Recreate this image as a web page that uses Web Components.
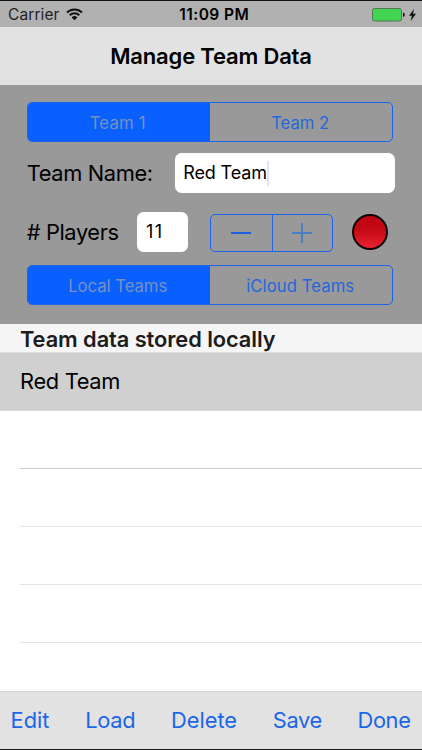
<!DOCTYPE html>
<html lang="en">
<head>
<meta charset="utf-8">
<title>Manage Team Data</title>
<style>
  html, body { margin: 0; height: 100%; }
  body {
    overflow: hidden;
    background: #fff;
    font-family: Inter, "Liberation Sans", sans-serif;
    color: #000;
  }
</style>
</head>
<body>
<team-manager></team-manager>

<script>
// Text that is tracked to fill a given width
class TrackedText extends HTMLElement {
  constructor() {
    super();
    this.attachShadow({ mode: 'open' });
    this.shadowRoot.innerHTML = `
      <style>
        :host { display: inline-block; white-space: nowrap; line-height: 1.2; }
        span { display: inline-block; }
      </style>
      <span><slot></slot></span>
    `;
  }

  connectedCallback() {
    const span = this.shadowRoot.querySelector('span');
    const width = parseFloat(this.getAttribute('width'));
    const natural = span.getBoundingClientRect().width;
    const count = this.textContent.length;
    if (width && natural) {
      span.style.letterSpacing = `${(width - natural) / count}px`;
    }
  }
}

class StatusBar extends HTMLElement {
  constructor() {
    super();
    this.attachShadow({ mode: 'open' });
    this.shadowRoot.innerHTML = `
      <style>
        :host {
          display: grid;
          grid-template-columns: 1fr auto 1fr;
          align-items: center;
          box-sizing: border-box;
          height: 27px;
          padding: 2px 6.5px 0 8px;
          border-top: 1px solid #151218;
          background: #b1b1b1;
          font-size: 15.5px;
        }
        .left, .right { display: flex; align-items: center; }
        .left { gap: 6px; color: #222; }
        .time { font-weight: 600; margin-left: 5px; }
        .right { justify-content: flex-end; gap: 4px; }
        svg { display: block; margin-bottom: 1px; }
      </style>
      <div class="left">
        <tracked-text width="51.5">Carrier</tracked-text>
        <svg width="17" height="13" viewBox="0 0 17 13" fill="none" stroke="#111" stroke-width="2">
          <path d="M1 4.5a10.6 10.6 0 0 1 15 0M3.7 7.3a6.8 6.8 0 0 1 9.6 0"/>
          <path d="M8.5 12.3 5.6 9.4a4.1 4.1 0 0 1 5.8 0z" fill="#111" stroke="none"/>
        </svg>
      </div>
      <tracked-text class="time" width="70">11:09 PM</tracked-text>
      <div class="right">
        <svg width="33" height="14" viewBox="0 0 33 14">
          <rect x=".5" y=".5" width="29" height="12.5" rx="2" fill="#43d551" stroke="#57735a"/>
          <path d="M31 4.5q1.8.6 1.8 2.3T31 9.1z" fill="#111"/>
        </svg>
        <svg width="7" height="12" viewBox="0 0 7 12">
          <path d="M5 0 0 6.7h2.8L1.7 12 7 4.8H4z" fill="#111"/>
        </svg>
      </div>
    `;
  }
}

class NavBar extends HTMLElement {
  constructor() {
    super();
    this.attachShadow({ mode: 'open' });
    this.shadowRoot.innerHTML = `
      <style>
        :host {
          display: flex;
          align-items: center;
          justify-content: center;
          box-sizing: border-box;
          height: 58px;
          padding-top: 1px;
          background: #e2e2e2;
          font-size: 22px;
          font-weight: 600;
        }
      </style>
      <slot></slot>
    `;
  }
}

class SegmentedControl extends HTMLElement {
  constructor() {
    super();
    this.attachShadow({ mode: 'open' });
    this.shadowRoot.innerHTML = `
      <style>
        :host {
          display: grid;
          grid-template-columns: 182px 1fr;
          box-sizing: border-box;
          width: 366px;
          height: 40px;
          border: 1px solid #1b63e8;
          border-radius: 5px;
          overflow: hidden;
          font-size: 16.7px;
          color: #2467dc;
        }
        div { display: flex; align-items: center; justify-content: center; padding: 2px 1px 0 0; }
        .on { background: #0a60ff; color: #7791bd; padding-right: 2px; }
      </style>
      <div class="on"><slot name="first"></slot></div>
      <div><slot name="second"></slot></div>
    `;
  }
}

class TextField extends HTMLElement {
  constructor() {
    super();
    this.attachShadow({ mode: 'open' });
    this.shadowRoot.innerHTML = `
      <style>
        :host {
          display: flex;
          align-items: center;
          box-sizing: border-box;
          height: 40px;
          padding-left: 8.5px;
          border-radius: 6.5px;
          background: #fff;
          font-size: 18px;
        }
        i { display: none; width: 2.5px; height: 25px; background: #dfe3fa; }
        :host([focused]) i { display: block; }
      </style>
      <slot></slot><i></i>
    `;
  }
}

class NumberStepper extends HTMLElement {
  constructor() {
    super();
    this.attachShadow({ mode: 'open' });
    this.shadowRoot.innerHTML = `
      <style>
        :host {
          display: grid;
          grid-template-columns: 1fr 1fr;
          box-sizing: border-box;
          width: 123px;
          height: 38px;
          border: 1px solid #1b63e8;
          border-radius: 5px;
        }
        div { display: flex; align-items: center; justify-content: center; }
        div + div { border-left: 1px solid #2467dc; }
        svg { display: block; }
      </style>
      <div>
        <svg width="20" height="20" stroke="#1a5fe0" stroke-width="2"><path d="M0 10h20"/></svg>
      </div>
      <div>
        <svg width="20" height="20" stroke="#4b7fc4" stroke-width="2"><path d="M0 10h20M10 0v20"/></svg>
      </div>
    `;
  }
}

class ColorDot extends HTMLElement {
  constructor() {
    super();
    this.attachShadow({ mode: 'open' });
    this.shadowRoot.innerHTML = `
      <style>
        :host {
          display: block;
          box-sizing: border-box;
          width: 36px;
          height: 36px;
          border: 2px solid #160303;
          border-radius: 50%;
          background: linear-gradient(#bd0310, #c40914 40%, #e62231);
        }
      </style>
    `;
  }
}

class TeamList extends HTMLElement {
  constructor() {
    super();
    this.attachShadow({ mode: 'open' });
    this.shadowRoot.innerHTML = `
      <style>
        :host { display: block; height: 367px; background: #fff; font-size: 21.8px; }
        header {
          display: flex;
          align-items: center;
          box-sizing: border-box;
          height: 28px;
          padding: 2px 0 0 20px;
          background: #f5f5f5;
          color: #1c1c1c;
          font-weight: 600;
        }
        .selected {
          display: flex;
          align-items: center;
          box-sizing: border-box;
          height: 59px;
          padding-left: 20px;
          border-top: 1px solid #dedede;
          border-bottom: 1px solid #dadada;
          background: #d0d0d0;
        }
        .empty {
          box-sizing: border-box;
          height: 58px;
          margin-left: 20px;
          border-bottom: 1px solid #e5e5e5;
        }
        .selected + .empty { border-color: #cecece; }
      </style>
      <header><slot name="title"></slot></header>
      <div class="selected"><slot></slot></div>
      <div class="empty"></div>
      <div class="empty"></div>
      <div class="empty"></div>
      <div class="empty"></div>
    `;
  }
}

class ToolBar extends HTMLElement {
  constructor() {
    super();
    this.attachShadow({ mode: 'open' });
    this.shadowRoot.innerHTML = `
      <style>
        :host {
          display: flex;
          align-items: center;
          justify-content: space-between;
          box-sizing: border-box;
          height: 59px;
          padding: 0 11.5px 1px 10.5px;
          border-top: 1px solid #d9d9d9;
          border-bottom: 1px solid #1b1b1d;
          background: #e2e2e2;
          font-size: 21.8px;
          color: #1b66e8;
        }
      </style>
      <slot></slot>
    `;
  }
}

class TeamManager extends HTMLElement {
  constructor() {
    super();
    this.attachShadow({ mode: 'open' });
    this.shadowRoot.innerHTML = `
      <style>
        :host { display: flex; flex-direction: column; width: 422px; height: 750px; }
        .panel {
          display: flex;
          flex-direction: column;
          box-sizing: border-box;
          height: 239px;
          padding: 17px 27px 0 26.7px;
          background: #999;
          font-size: 21.8px;
        }
        .row { display: flex; align-items: center; height: 40px; }
        .name { margin: 11px 0 19px; }
        .players { margin-bottom: 13px; }
        .name text-field { width: 220px; margin-left: 22.1px; }
        .players text-field { width: 51px; margin-left: 18.8px; }
        number-stepper { margin: 2px 0 0 21.7px; }
        color-dot { margin: 0 0 1px 19px; }
      </style>
      <status-bar></status-bar>
      <nav-bar><tracked-text width="201.5">Manage Team Data</tracked-text></nav-bar>
      <div class="panel">
        <segmented-control>
          <tracked-text slot="first" width="56">Team 1</tracked-text>
          <tracked-text slot="second" width="58">Team 2</tracked-text>
        </segmented-control>
        <div class="row name">
          <tracked-text width="126">Team Name:</tracked-text>
          <text-field focused><tracked-text width="83.5">Red Team</tracked-text></text-field>
        </div>
        <div class="row players">
          <tracked-text width="92">#&nbsp;Players</tracked-text>
          <text-field><tracked-text width="17.5">11</tracked-text></text-field>
          <number-stepper></number-stepper>
          <color-dot></color-dot>
        </div>
        <segmented-control>
          <tracked-text slot="first" width="99">Local Teams</tracked-text>
          <tracked-text slot="second" width="108">iCloud Teams</tracked-text>
        </segmented-control>
      </div>
      <team-list>
        <tracked-text slot="title" width="255.5">Team data stored locally</tracked-text>
        <tracked-text width="100">Red Team</tracked-text>
      </team-list>
      <tool-bar>
        <tracked-text width="39">Edit</tracked-text>
        <tracked-text width="50">Load</tracked-text>
        <tracked-text width="66">Delete</tracked-text>
        <tracked-text width="49">Save</tracked-text>
        <tracked-text width="53">Done</tracked-text>
      </tool-bar>
    `;
  }
}

customElements.define('status-bar', StatusBar);
customElements.define('nav-bar', NavBar);
customElements.define('segmented-control', SegmentedControl);
customElements.define('text-field', TextField);
customElements.define('number-stepper', NumberStepper);
customElements.define('color-dot', ColorDot);
customElements.define('team-list', TeamList);
customElements.define('tool-bar', ToolBar);
customElements.define('team-manager', TeamManager);
// Last, so that the text is already in its final place when it is measured
customElements.define('tracked-text', TrackedText);
</script>
</body>
</html>
